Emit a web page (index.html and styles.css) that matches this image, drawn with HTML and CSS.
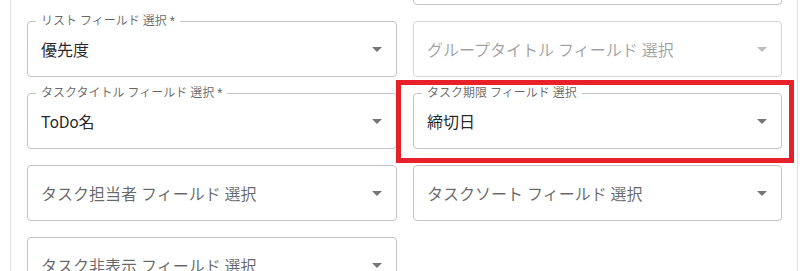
FILE: index.html
```html
<!DOCTYPE html>
<html lang="ja">
<head>
    <meta charset="UTF-8">
    <title>フィールド設定</title>
    <link rel="stylesheet" href="styles.css">
</head>
<body>
    <div class="panel">
        <div class="fields">
            <div class="empty"></div>
            <div class="field">
                <svg class="arrow" viewBox="0 0 24 24"><path d="M7 10l5 5 5-5z"/></svg>
            </div>

            <div class="field">
                <span class="label">リスト フィールド 選択 *</span>
                <span class="value">優先度</span>
                <svg class="arrow" viewBox="0 0 24 24"><path d="M7 10l5 5 5-5z"/></svg>
            </div>
            <div class="field disabled">
                <span class="placeholder">グループタイトル フィールド 選択</span>
                <svg class="arrow" viewBox="0 0 24 24"><path d="M7 10l5 5 5-5z"/></svg>
            </div>

            <div class="field">
                <span class="label">タスクタイトル フィールド 選択 *</span>
                <span class="value">ToDo名</span>
                <svg class="arrow" viewBox="0 0 24 24"><path d="M7 10l5 5 5-5z"/></svg>
            </div>
            <div class="field highlighted">
                <span class="label">タスク期限 フィールド 選択</span>
                <span class="value">締切日</span>
                <svg class="arrow" viewBox="0 0 24 24"><path d="M7 10l5 5 5-5z"/></svg>
                <div class="marker"></div>
            </div>

            <div class="field">
                <span class="placeholder">タスク担当者 フィールド 選択</span>
                <svg class="arrow" viewBox="0 0 24 24"><path d="M7 10l5 5 5-5z"/></svg>
            </div>
            <div class="field">
                <span class="placeholder">タスクソート フィールド 選択</span>
                <svg class="arrow" viewBox="0 0 24 24"><path d="M7 10l5 5 5-5z"/></svg>
            </div>

            <div class="field">
                <span class="placeholder">タスク非表示 フィールド 選択</span>
                <svg class="arrow" viewBox="0 0 24 24"><path d="M7 10l5 5 5-5z"/></svg>
            </div>
            <div class="empty"></div>
        </div>
    </div>
</body>
</html>
```

FILE: styles.css
```css
body {
    margin: 0;
    font-family: Roboto, "Noto Sans CJK JP", sans-serif;
    background: #fff;
    overflow: hidden;
}
.panel {
    margin-left: 10px;
    width: 788px;
    box-sizing: border-box;
    border-left: 1px solid #e0e0e0;
    border-right: 1px solid #e0e0e0;
    padding: 0 16px;
    height: 271px;
    overflow: hidden;
}
.fields {
    margin-top: -51px;
    display: grid;
    grid-template-columns: 370px 369px;
    gap: 16px 16px;
}
.field {
    position: relative;
    height: 56px;
    box-sizing: border-box;
    border: 1px solid #c4c4c4;
    border-radius: 4px;
    display: flex;
    align-items: center;
    padding: 0 13px;
}
.label {
    position: absolute;
    top: -8px;
    left: 8px;
    padding: 0 5px;
    background: #fff;
    font-size: 12px;
    line-height: 14px;
    color: rgba(0, 0, 0, 0.6);
}
.value {
    font-size: 16px;
    color: rgba(0, 0, 0, 0.87);
}
.placeholder {
    font-size: 16px;
    color: rgba(0, 0, 0, 0.6);
}
.arrow {
    position: absolute;
    right: 7px;
    top: 15px;
    width: 24px;
    height: 24px;
    fill: rgba(0, 0, 0, 0.54);
}
.disabled {
    border-color: #d6d6d6;
}
.disabled .placeholder {
    color: rgba(0, 0, 0, 0.38);
}
.disabled .arrow {
    fill: rgba(0, 0, 0, 0.26);
}
.marker {
    position: absolute;
    left: -18px;
    top: -14px;
    width: 398px;
    height: 83px;
    box-sizing: border-box;
    border: 5px solid #e8202a;
}
```
